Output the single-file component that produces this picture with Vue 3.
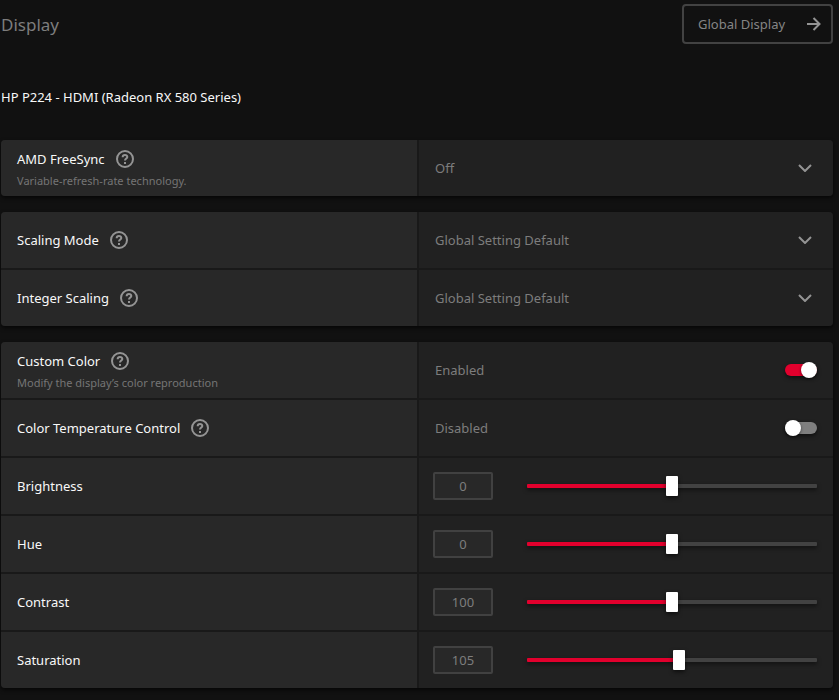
<script setup>
import { reactive } from 'vue'

const groups = reactive([
  [
    { id: 'freesync', type: 'select', label: 'AMD FreeSync', help: true, note: 'Variable-refresh-rate technology.', value: 'Off', options: ['Off', 'On'] },
  ],
  [
    { id: 'scaling', type: 'select', label: 'Scaling Mode', help: true, value: 'Global Setting Default', options: ['Global Setting Default', 'Preserve aspect ratio', 'Full panel', 'Center'] },
    { id: 'integer', type: 'select', label: 'Integer Scaling', help: true, value: 'Global Setting Default', options: ['Global Setting Default', 'Enabled', 'Disabled'] },
  ],
  [
    { id: 'color', type: 'toggle', label: 'Custom Color', help: true, note: 'Modify the display’s color reproduction', value: true },
    { id: 'temperature', type: 'toggle', label: 'Color Temperature Control', help: true, value: false },
    { id: 'brightness', type: 'range', label: 'Brightness', value: 0, min: -100, max: 100 },
    { id: 'hue', type: 'range', label: 'Hue', value: 0, min: -30, max: 30 },
    { id: 'contrast', type: 'range', label: 'Contrast', value: 100, min: 0, max: 200 },
    { id: 'saturation', type: 'range', label: 'Saturation', value: 105, min: 0, max: 200 },
  ],
])

const fill = (row) => `${((row.value - row.min) / (row.max - row.min)) * 100}%`
</script>

<template>
  <main class="page">
    <header class="top">
      <h1>Display</h1>
      <button type="button" class="global">
        <span>Global Display</span>
        <svg width="14" height="14" viewBox="0 0 14 14" aria-hidden="true">
          <path d="M0 7h12M6.5 1l6 6-6 6" />
        </svg>
      </button>
    </header>

    <h2>HP P224 - HDMI (Radeon RX 580 Series)</h2>

    <section v-for="(rows, i) in groups" :key="i" class="card">
      <div v-for="row in rows" :key="row.id" class="row">
        <div class="name" :class="{ noted: row.note }">
          <div class="title">
            <label :for="row.id">{{ row.label }}</label>
            <button v-if="row.help" type="button" class="help" :aria-label="`About ${row.label}`">
              <svg width="18" height="18" viewBox="0 0 18 18" aria-hidden="true">
                <circle cx="9" cy="9" r="8" />
                <path d="M6.7 7.3V7a2.3 2.1 0 0 1 4.6 0c0 1.5-2.3 1.6-2.3 3.5" />
                <path d="M9 12v2" />
              </svg>
            </button>
          </div>
          <p v-if="row.note">{{ row.note }}</p>
        </div>

        <div v-if="row.type === 'select'" class="control picker">
          <select :id="row.id" v-model="row.value">
            <option v-for="o in row.options" :key="o">{{ o }}</option>
          </select>
          <svg class="chevron" width="14" height="8" viewBox="0 0 14 8" aria-hidden="true">
            <path d="M1 1l6 6 6-6" />
          </svg>
        </div>

        <div v-else-if="row.type === 'toggle'" class="control toggle">
          <span>{{ row.value ? 'Enabled' : 'Disabled' }}</span>
          <input :id="row.id" v-model="row.value" type="checkbox" role="switch" />
        </div>

        <div v-else class="control slider">
          <input :id="row.id" v-model.number="row.value" class="amount" type="text" inputmode="numeric" />
          <input
            v-model.number="row.value"
            class="range"
            type="range"
            :min="row.min"
            :max="row.max"
            :aria-label="row.label"
            :style="{ '--fill': fill(row) }"
          />
        </div>
      </div>
    </section>
  </main>
</template>

<style>
body {
  background: #111;
}
</style>

<style scoped>
.page {
  padding: 4px 6px 12px 1px;
  color: #f8f8f8;
  font: 13px/20px "Segoe UI", "Noto Sans", "Open Sans", sans-serif;
}

.page *,
.page *::before {
  box-sizing: border-box;
}

h1,
h2,
p {
  margin: 0;
  font-weight: 400;
}

button,
input,
select {
  margin: 0;
  font: inherit;
}

.top {
  display: flex;
  align-items: center;
  justify-content: space-between;
}

h1 {
  padding-top: 2px;
  color: #7d7d7d;
  font-size: 17px;
  line-height: 24px;
}

.global {
  display: flex;
  align-items: center;
  justify-content: space-between;
  gap: 20px;
  min-width: 151px;
  height: 40px;
  padding: 0 10px 0 14px;
  border: 2px solid #424242;
  border-radius: 4px;
  background: transparent;
  color: #858585;
}

svg {
  display: block;
  fill: none;
  stroke: #949494;
  stroke-width: 2;
}

h2 {
  margin: 43px 0 33px;
  font-size: 13px;
}

.card {
  display: grid;
  gap: 2px;
  margin-bottom: 16px;
  overflow: hidden;
  border-radius: 4px;
  background: #191919;
  box-shadow: 0 2px 4px #000a;
}

.row {
  display: grid;
  grid-template-columns: 1fr 1fr;
  min-height: 56px;
}

.name {
  display: flex;
  flex-direction: column;
  justify-content: center;
  padding: 0 16px;
  background: #282828;
}

.noted {
  padding-top: 4px;
}

.title {
  display: flex;
  align-items: center;
  gap: 11px;
}

.help {
  padding: 0;
  border: 0;
  background: none;
}

p {
  margin-top: 2px;
  color: #757575;
  font-size: 11px;
}

.control {
  display: flex;
  align-items: center;
  border-left: 2px solid #191919;
  background: #212121;
  color: #7d7d7d;
}

.picker {
  display: grid;
}

.picker > * {
  grid-area: 1 / 1;
}

select {
  width: 100%;
  height: 100%;
  padding: 0 40px 0 16px;
  border: 0;
  appearance: none;
  background: transparent;
  color: inherit;
}

.chevron {
  justify-self: end;
  margin-right: 21px;
  pointer-events: none;
}

.toggle {
  justify-content: space-between;
  padding: 0 16px;
}

.toggle input {
  display: flex;
  align-items: center;
  width: 32px;
  height: 12px;
  border-radius: 6px;
  appearance: none;
  background: #7f7f7f;
  box-shadow: 0 2px 4px #0008;
}

.toggle input::before {
  content: "";
  width: 16px;
  height: 16px;
  flex: none;
  border-radius: 50%;
  background: #fff;
  box-shadow: 0 1px 3px #0008;
}

.toggle input:checked {
  justify-content: flex-end;
  background: #e2002d;
}

.slider {
  gap: 34px;
  padding: 0 16px 0 14px;
}

.amount {
  width: 60px;
  height: 28px;
  flex: none;
  padding: 0;
  border: 2px solid #414141;
  border-radius: 2px;
  background: #282828;
  color: #7d7d7d;
  text-align: center;
}

.range {
  min-width: 0;
  height: 20px;
  flex: 1;
  appearance: none;
  background: none;
}

.range::-webkit-slider-runnable-track {
  height: 4px;
  border-radius: 1px;
  background: linear-gradient(to right, #e2002d var(--fill), #424242 var(--fill));
  box-shadow: 0 2px 4px #0008;
}

.range::-webkit-slider-thumb {
  width: 12px;
  height: 20px;
  margin-top: -8px;
  border-radius: 1px;
  appearance: none;
  background: #fff;
  box-shadow: 0 2px 4px #0009;
}
</style>
